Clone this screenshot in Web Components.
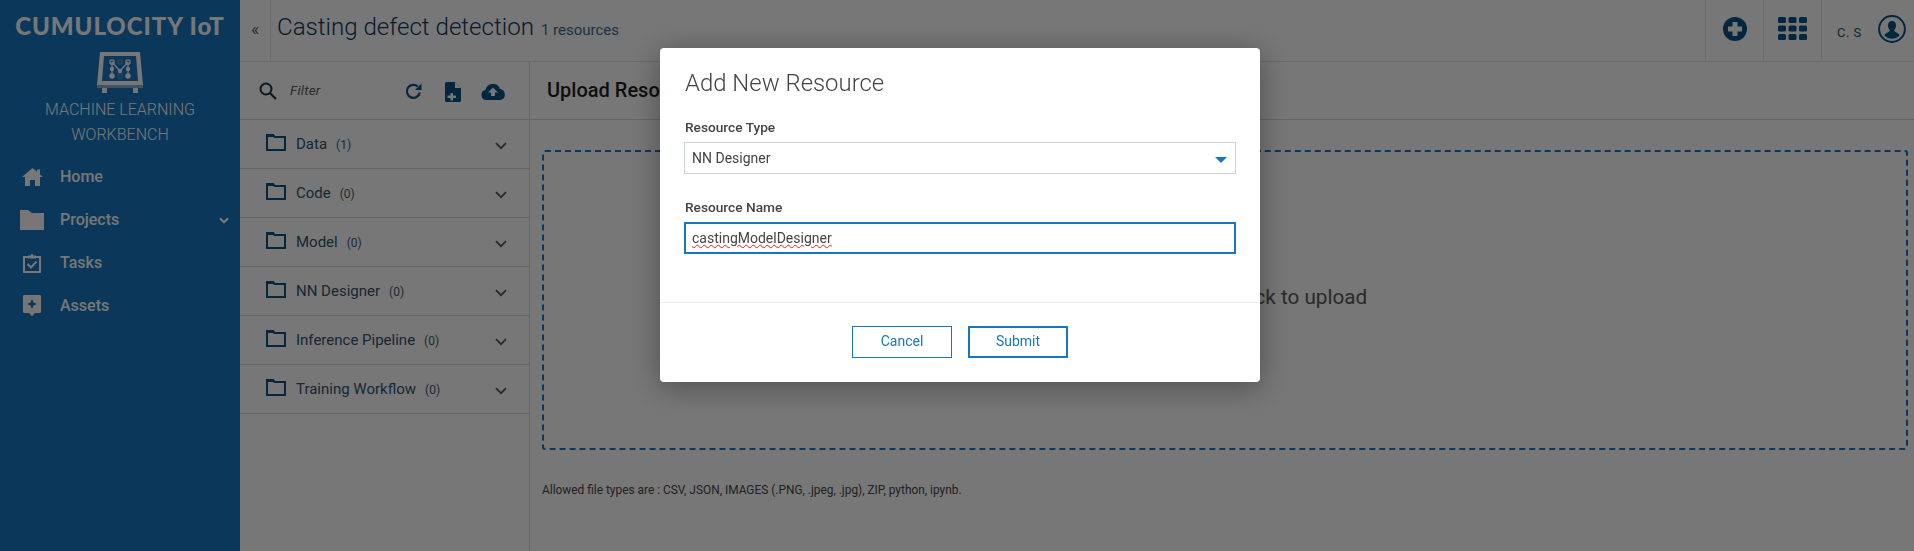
<!DOCTYPE html>
<html lang="en">
<head>
<meta charset="utf-8">
<title>Casting defect detection</title>
<style>
  html, body { margin: 0; height: 100%; overflow: hidden; background: #eee; font-family: Roboto, "Liberation Sans", sans-serif; }
</style>
</head>
<body>
<ml-app></ml-app>
<script>
/**
 * Left navigation entry, icon passed in a slot
 */
class NavItem extends HTMLElement {
    connectedCallback() {
        this.root = this.attachShadow({mode: 'open'});
        const arrow = this.hasAttribute('expandable')
            ? `<svg class='arrow' width='10' height='7' viewBox='0 0 10 7'><path d='M1 1.200l4 4 4-4' fill='none' stroke='#eee' stroke-width='2.200'/></svg>` : '';
        this.root.innerHTML = `<style>
            :host { display: flex; align-items: center; height: 43px; padding-left: 20px; padding-right: 11px; color: #eee; font: 500 16px Roboto, sans-serif; }
            .icon { width: 40px; display: flex; align-items: center; }
            .label { flex: 1; }
            .arrow { display: block; margin-top: 2px; }
        </style><span class='icon'><slot name='icon'></slot></span><span class='label'>${this.getAttribute('label')}</span>${arrow}`;
    }
}
customElements.define('nav-item', NavItem);

/**
 * Blue sidebar: brand, logo, product name and nav
 */
class MlSidebar extends HTMLElement {
    connectedCallback() {
        this.root = this.attachShadow({mode: 'open'});
        this.root.innerHTML = `<style>
            :host { display: flex; flex-direction: column; background: #146eb4; color: #eee; }
            .brand { font: 900 24px Lato, sans-serif; letter-spacing: .95px; text-align: center; height: 52px; line-height: 52px; white-space: nowrap; }
            .logo { display: block; margin: 0 auto 0 97px; }
            .product { font: 300 16px/25px Roboto, sans-serif; text-align: center; margin-top: 4px; margin-bottom: 8px; }
            svg { display: block; }
        </style>
        <div class='brand'>CUMULOCITY IoT</div>
        <svg class='logo' width='46' height='41' viewBox='0 0 46 41'>
            <path d='M3 0h40l3 33H0z' fill='#eee'/>
            <path d='M7 4h32l2 25H5z' fill='#146eb4'/>
            <path d='M0 33h46v3H0z' fill='#7ea6c6'/>
            <path d='M5 36h5v5H5zM36 36h5v5h-5z' fill='#eee'/>
            <g fill='none' stroke='#eee' stroke-width='1.300'>
                <path d='M15 10v13M31 10v13M15 10l8 9 8-9'/>
                <circle cx='15' cy='10' r='2.200'/><circle cx='31' cy='10' r='2.200'/>
            </g>
            <g fill='#eee'>
                <circle cx='15' cy='17' r='2.200'/><circle cx='31' cy='17' r='2.200'/>
                <circle cx='15' cy='24' r='2.800'/><circle cx='31' cy='24' r='2.800'/><circle cx='23' cy='19' r='2.200'/>
            </g>
            <g fill='none' stroke='#4a90c8' stroke-width='1.200'>
                <circle cx='23' cy='10' r='2.200'/><circle cx='23' cy='24' r='2.200'/>
            </g>
        </svg>
        <div class='product'>MACHINE LEARNING<br>WORKBENCH</div>
        <nav-item label='Home'><svg slot='icon' width='21' height='18' viewBox='0 0 21 18' style='margin-left:2px'><path d='M10.500 0 0 9h3v9h5v-6h5v6h5V9h3l-3-2.600V1.500h-3v2.300z' fill='#eee'/></svg></nav-item>
        <nav-item label='Projects' expandable><svg slot='icon' width='24' height='20' viewBox='0 0 24 20'><path d='M0 0h8l4 3h12v17H0z' fill='#eee'/></svg></nav-item>
        <nav-item label='Tasks'><svg slot='icon' width='18' height='20' viewBox='0 0 18 20' style='margin-left:3px'><path d='M1 4h16v15H1z' fill='none' stroke='#eee' stroke-width='2'/><path d='M5 5.500V2.500h2.500a1.500 1.500 0 0 1 3 0H13v3z' fill='#eee'/><path d='M4.500 11 8 14.500l5.500-6' fill='none' stroke='#eee' stroke-width='2'/></svg></nav-item>
        <nav-item label='Assets'><svg slot='icon' width='18' height='21' viewBox='0 0 18 21' style='margin-left:3px'><path d='M1 0h16a1 1 0 0 1 1 1v16a1 1 0 0 1-1 1h-5l-3 3-3-3H1a1 1 0 0 1-1-1V1a1 1 0 0 1 1-1z' fill='#eee'/><path d='M9 4 10.500 7.500 14 9 10.500 10.500 9 14 7.500 10.500 4 9 7.500 7.500z' fill='#146eb4'/></svg></nav-item>`;
    }
}
customElements.define('ml-sidebar', MlSidebar);

/**
 * Top bar with page title and the right-hand action cells
 */
class MlTopbar extends HTMLElement {
    connectedCallback() {
        this.root = this.attachShadow({mode: 'open'});
        this.root.innerHTML = `<style>
            :host { display: flex; align-items: stretch; height: 61px; border-bottom: 1px solid #d8d8d8; color: #1a3f5c; }
            .toggle { width: 31px; box-sizing: border-box; border-right: 1px solid #d8d8d8; display: flex; align-items: center; justify-content: center; font: 300 18px Roboto, sans-serif; color: #123a5a; padding-bottom: 4px; }
            .title { flex: 1; padding-left: 6px; display: flex; align-items: baseline; gap: 7px; line-height: 55px; white-space: nowrap; }
            h1 { margin: 0; font: 300 24.100px/55px Roboto, sans-serif; color: #0c3556; }
            small { font: 400 15px Roboto, sans-serif; color: #3a6484; }
            .cell { width: 58px; border-left: 1px solid #d8d8d8; box-sizing: border-box; display: flex; align-items: center; justify-content: center; padding-bottom: 4px; }
            .user { width: 93px; border-left: 1px solid #d8d8d8; box-sizing: border-box; display: flex; align-items: center; padding: 0 8px 4px 15px; justify-content: space-between; font: 400 13px Roboto, sans-serif; letter-spacing: .5px; color: #2c4a62; }
            .user span { padding-top: 7px; }
        </style>
        <div class='toggle'>«</div>
        <div class='title'><h1>Casting defect detection</h1><small>1 resources</small></div>
        <div class='cell'><svg width='24' height='24' viewBox='0 0 24 24'><circle cx='12' cy='12' r='12' fill='#084c7e'/><path d='M9.500 5h5v4.500H19v5h-4.500V19h-5v-4.500H5v-5h4.500z' fill='#eee'/></svg></div>
        <div class='cell'><svg width='29' height='23' viewBox='0 0 29 23'><g fill='#084c7e'><rect width='8' height='6' rx='1.500'/><rect x='10.500' width='8' height='6' rx='1.500'/><rect x='21' width='8' height='6' rx='1.500'/><rect y='8.500' width='8' height='6' rx='1.500'/><rect x='10.500' y='8.500' width='8' height='6' rx='1.500'/><rect x='21' y='8.500' width='8' height='6' rx='1.500'/><rect y='17' width='8' height='6' rx='1.500'/><rect x='10.500' y='17' width='8' height='6' rx='1.500'/><rect x='21' y='17' width='8' height='6' rx='1.500'/></g></svg></div>
        <div class='user'><span>C. S</span><svg width='28' height='28' viewBox='0 0 28 28'><circle cx='14' cy='14' r='12.900' fill='none' stroke='#084c7e' stroke-width='2'/><path d='M14 6c-2.800 0-4 2-4 4.500 0 2 .8 3.500 1.800 4.600 0 1.200-.5 1.700-2 2.300-1.500.6-3 1.300-3.300 3.300a11 11 0 0 0 15 0c-.3-2-1.800-2.700-3.300-3.300-1.500-.6-2-1.100-2-2.300 1-1.100 1.800-2.600 1.800-4.600C18 8 16.800 6 14 6z' fill='#084c7e'/></svg></div>`;
    }
}
customElements.define('ml-topbar', MlTopbar);

/**
 * One resource folder row of the accordion
 */
class ResourceRow extends HTMLElement {
    connectedCallback() {
        this.root = this.attachShadow({mode: 'open'});
        this.root.innerHTML = `<style>
            :host { display: flex; align-items: center; height: 48px; border-bottom: 1px solid #ccc; padding-left: 26px; padding-right: 22px; color: #2e4f69; font: 400 15px Roboto, sans-serif; }
            svg.folder { display: block; margin-right: 10px; margin-top: -4px; }
            .count { font-size: 12px; margin-left: 9px; flex: 1; padding-top: 1px; color: #3e5568; }
            svg.arrow { display: block; margin-top: 4px; }
        </style>
        <svg class='folder' width='20' height='17' viewBox='0 0 20 17'><path d='M1 16V1h6l1.500 2H19v13z' fill='none' stroke='#084c7e' stroke-width='2'/><path d='M0 0h7.500l2 3H0z' fill='#084c7e'/></svg>
        <span class='name'>${this.getAttribute('name')}</span><span class='count'>(${this.getAttribute('count')})</span>
        <svg class='arrow' width='12' height='8' viewBox='0 0 12 8'><path d='M1 1.200 6 6.200l5-5' fill='none' stroke='#555' stroke-width='1.800'/></svg>`;
    }
}
customElements.define('resource-row', ResourceRow);

/**
 * Filter bar plus the resource folders
 */
class ResourcePanel extends HTMLElement {
    connectedCallback() {
        this.root = this.attachShadow({mode: 'open'});
        this.root.innerHTML = `<style>
            :host { display: block; border-right: 1px solid #ccc; }
            .filter { display: flex; align-items: center; height: 57px; border-bottom: 1px solid #ccc; padding-left: 19px; padding-right: 24px; }
            .filter em { font: italic 400 13.500px Roboto, sans-serif; color: #555; margin: 0 0 2px 13px; flex: 1; letter-spacing: .2px; }
            svg { display: block; }
            .acts { display: flex; align-items: center; padding-top: 2px; }
            .file { margin-left: 23px; }
            .cloud { margin-left: 20px; }
        </style>
        <div class='filter'>
            <svg width='18' height='18' viewBox='0 0 18 18'><circle cx='7' cy='7' r='5.500' fill='none' stroke='#1c2c38' stroke-width='2'/><path d='m11 11 6 6' stroke='#1c2c38' stroke-width='2.200'/></svg>
            <em>Filter</em>
            <div class='acts'>
                <svg width='17' height='17' viewBox='0 0 17 17'><path d='M14.800 9.500A6.500 6.500 0 1 1 12.800 3.500' fill='none' stroke='#084c7e' stroke-width='2.200'/><path d='M16.500 .5v6.500H10z' fill='#084c7e'/></svg>
                <svg class='file' width='16' height='20' viewBox='0 0 16 20'><path d='M1.500 0H10l6 6v12.500a1.500 1.500 0 0 1-1.500 1.500h-13A1.500 1.500 0 0 1 0 18.500v-17A1.500 1.500 0 0 1 1.500 0z' fill='#084c7e'/><path d='M10 0v6h6z' fill='#eee'/><path d='M2.500 13.500h3V11h2.500v2.500h3V16H8v2.500H5.500V16h-3z' fill='#eee'/></svg>
                <svg class='cloud' width='24' height='16' viewBox='0 0 24 16'><path d='M5.500 16a5 5 0 0 1-1-9.900A7.500 7.500 0 0 1 19 5a5.600 5.600 0 0 1 .5 11z' fill='#084c7e'/><path d='M12 3.500 17 8.500h-3v3.500h-4V8.500H7z' fill='#eee'/></svg>
            </div>
        </div>
        <slot></slot>`;
    }
}
customElements.define('resource-panel', ResourcePanel);

/**
 * Right pane with the drop area
 */
class UploadPane extends HTMLElement {
    connectedCallback() {
        this.root = this.attachShadow({mode: 'open'});
        this.root.innerHTML = `<style>
            :host { display: flex; flex-direction: column; min-width: 0; }
            h2 { margin: 0; height: 57px; border-bottom: 1px solid #ccc; padding-left: 17px; font: 500 20px/56px Roboto, sans-serif; color: #1d1d1d; }
            .drop { height: 300px; margin: 30px 6px 0 12px; border: 2px dashed #146eb4; border-radius: 3px; box-sizing: border-box; display: flex; align-items: center; justify-content: center; font: 400 20.700px Roboto, sans-serif; color: #555; padding-bottom: 6px; }
            p { margin: 0; padding: 33px 0 0 12px; font: 400 11.900px/14px Roboto, sans-serif; color: #444; }
        </style>
        <h2>Upload Resource</h2>
        <div class='drop'>Drop file here or click to upload</div>
        <p>Allowed file types are : CSV, JSON, IMAGES (.PNG, .jpeg, .jpg), ZIP, python, ipynb.</p>`;
    }
}
customElements.define('upload-pane', UploadPane);

/**
 * Add New Resource dialog with its backdrop
 */
class ResourceDialog extends HTMLElement {
    connectedCallback() {
        this.root = this.attachShadow({mode: 'open'});
        this.root.innerHTML = `<style>
            :host { position: fixed; inset: 0; display: flex; justify-content: center; align-items: flex-start; padding: 48px 0 0 6px; background: rgba(0,0,0,.5); font-family: Roboto, sans-serif; }
            .modal { width: 600px; height: 334px; background: #fff; border-radius: 4px; box-shadow: 0 5px 30px rgba(0,0,0,.35); display: flex; flex-direction: column; box-sizing: border-box; }
            .body { padding: 0 24px; height: 254px; box-sizing: content-box; border-bottom: 1px solid #eee; }
            h3 { margin: 0; font: 300 23.900px/36px Roboto, sans-serif; color: #444; padding: 17px 0 0 1px; }
            label { display: block; font: 500 13.700px/18px Roboto, sans-serif; color: #444; margin: 17px 0 6px; padding-left: 1px; }
            label.second { margin-top: 24px; }
            .field { height: 32px; box-sizing: border-box; padding: 0 7px; display: flex; align-items: center; font: 400 14px Roboto, sans-serif; color: #444; justify-content: space-between; }
            .select { border: 1px solid #ccd2d6; }
            .input { border: 2px solid #1776bf; padding: 0 6px; }
            .input span { text-decoration: underline wavy #e02020 1px; text-underline-offset: 1px; }
            .select i { width: 0; height: 0; border: 6px solid transparent; border-top: 6px solid #1776bf; border-bottom: 0; margin-right: 1px; margin-top: 3px; }
            .foot { flex: 1; display: flex; justify-content: center; gap: 16px; align-items: flex-start; padding-top: 23px; box-sizing: border-box; }
            button { width: 100px; height: 32px; box-sizing: border-box; background: #fff; border: 1px solid #1776bf; color: #1776bf; font: 400 14px Roboto, sans-serif; padding: 0 0 2px; }
            button.primary { border-width: 2px; }
        </style>
        <div class='modal'>
            <div class='body'>
                <h3>Add New Resource</h3>
                <label>Resource Type</label>
                <div class='field select'>NN Designer<i></i></div>
                <label class='second'>Resource Name</label>
                <div class='field input'><span>castingModelDesigner</span></div>
            </div>
            <div class='foot'><button>Cancel</button><button class='primary'>Submit</button></div>
        </div>`;
    }
}
customElements.define('resource-dialog', ResourceDialog);

/**
 * Page shell
 */
class MlApp extends HTMLElement {
    connectedCallback() {
        this.root = this.attachShadow({mode: 'open'});
        this.root.innerHTML = `<style>
            :host { display: grid; grid-template-columns: 240px 1fr; height: 551px; background: #eee; overflow: hidden; }
            main { display: flex; flex-direction: column; min-width: 0; }
            .content { display: grid; grid-template-columns: 290px 1fr; flex: 1; }
        </style>
        <ml-sidebar></ml-sidebar>
        <main>
            <ml-topbar></ml-topbar>
            <div class='content'>
                <resource-panel>
                    <resource-row name='Data' count='1'></resource-row>
                    <resource-row name='Code' count='0'></resource-row>
                    <resource-row name='Model' count='0'></resource-row>
                    <resource-row name='NN Designer' count='0'></resource-row>
                    <resource-row name='Inference Pipeline' count='0'></resource-row>
                    <resource-row name='Training Workflow' count='0'></resource-row>
                </resource-panel>
                <upload-pane></upload-pane>
            </div>
        </main>
        <resource-dialog></resource-dialog>`;
    }
}
customElements.define('ml-app', MlApp);
</script>
</body>
</html>
